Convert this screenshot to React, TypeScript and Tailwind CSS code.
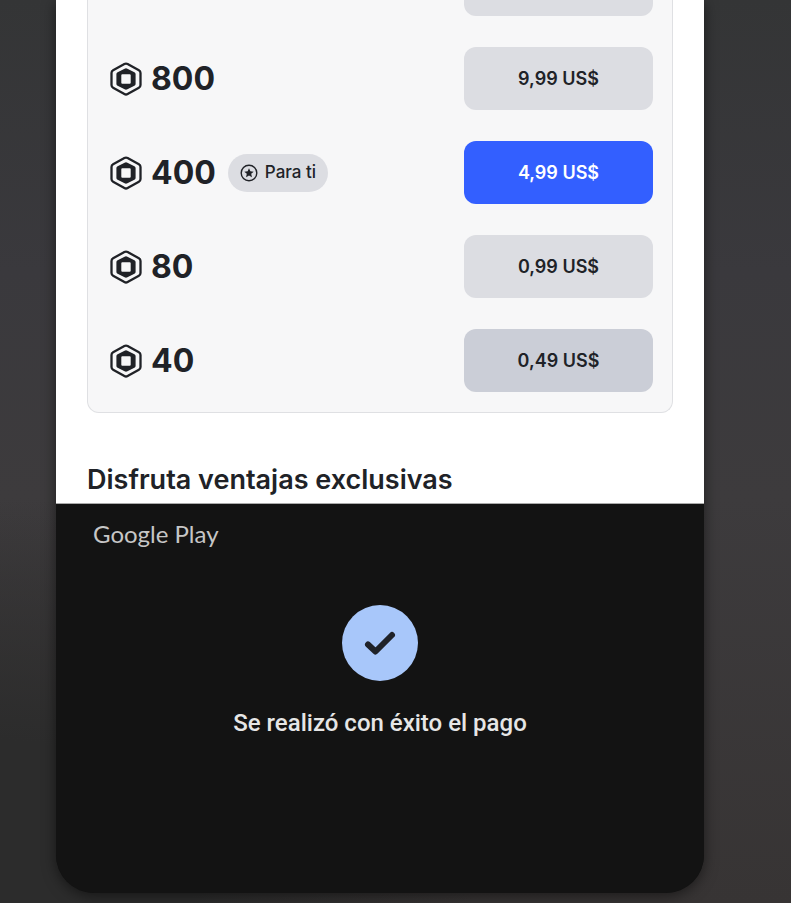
import React from 'react';
import clsx from 'clsx';

const packs = [
  { id: 1, amount: '800', price: '9,99 US$', style: 'bg-[#dcdde2] text-[#202227]' },
  { id: 2, amount: '400', price: '4,99 US$', style: 'bg-[#335fff] text-white', forYou: true },
  { id: 3, amount: '80', price: '0,99 US$', style: 'bg-[#dcdde2] text-[#202227]' },
  { id: 4, amount: '40', price: '0,49 US$', style: 'bg-[#cbced7] text-[#202227]' }
];

const RobuxIcon: React.FC = () => (
  <svg viewBox="0 0 32 34" className="h-[34px] w-8 shrink-0" fill="none" aria-hidden="true">
    <path
      d="M14.4 2a3.2 3.2 0 0 1 3.2 0l11.3 6.3a3.1 3.1 0 0 1 1.6 2.7v12a3.1 3.1 0 0 1-1.6 2.7L17.6 32a3.2 3.2 0 0 1-3.2 0L3.1 25.7A3.1 3.1 0 0 1 1.5 23V11a3.1 3.1 0 0 1 1.6-2.7z"
      stroke="#202227"
      strokeWidth="2.3"
    />
    <path
      fillRule="evenodd"
      d="M14.6 6.7a2.8 2.8 0 0 1 2.8 0l7 3.6a2 2 0 0 1 1.2 1.8v9.8a2 2 0 0 1-1.2 1.8l-7 3.6a2.8 2.8 0 0 1-2.8 0l-7-3.6a2 2 0 0 1-1.2-1.8v-9.8a2 2 0 0 1 1.2-1.8zM12.3 12.3a1 1 0 0 0-1 1v7.4a1 1 0 0 0 1 1h7.4a1 1 0 0 0 1-1v-7.4a1 1 0 0 0-1-1z"
      fill="#202227"
    />
  </svg>
);

const StarIcon: React.FC = () => (
  <svg viewBox="0 0 18 18" className="size-[18px]" aria-hidden="true">
    <circle cx="9" cy="9" r="7.8" fill="none" stroke="#202227" strokeWidth="1.4" />
    <path d="m9 4.3 1.35 3.05 3.35.3-2.5 2.2.75 3.3L9 11.45l-2.95 1.7.75-3.3-2.5-2.2 3.35-.3z" fill="#202227" />
  </svg>
);

const PackList: React.FC = () => (
  <div className="rounded-b-xl border border-t-0 border-[#dfe0e3] bg-[#f7f7f8] pb-5 pl-[22px] pr-[19px]">
    <div className="ml-auto h-4 w-[189px] rounded-b-xl bg-[#dcdde2]" />
    <ul>
      {packs.map((pack) => (
        <li key={pack.id} className="mt-[31px] flex items-center">
          <RobuxIcon />
          <span className="ml-[9px] text-[32px] font-bold leading-10">{pack.amount}</span>
          {pack.forYou && (
            <span className="ml-3 flex h-[38px] items-center gap-[7px] rounded-full bg-[#dcdde2] px-3 text-[17px] font-medium">
              <StarIcon />
              Para ti
            </span>
          )}
          <button
            type="button"
            className={clsx('ml-auto h-[63px] w-[189px] rounded-xl text-lg font-semibold', pack.style)}
          >
            {pack.price}
          </button>
        </li>
      ))}
    </ul>
  </div>
);

const PaymentSheet: React.FC = () => (
  <section className="rounded-b-[38px] border-t border-[#aaaaaa] bg-[#131313] px-[37px] pb-[152px] pt-3 font-[Roboto,sans-serif] text-[#e6e6e6]">
    <div className="font-[Lato,sans-serif] text-2xl leading-9 text-[#c6c6c6]">Google Play</div>
    <div className="mt-[53px] flex flex-col items-center">
      <svg viewBox="0 0 76 76" className="size-[76px]" role="img" aria-label="Pago completado">
        <circle cx="38" cy="38" r="38" fill="#a8c7fa" />
        <path
          d="M26 39.500 33.500 46.500 50 30"
          fill="none"
          stroke="#1f2228"
          strokeWidth="6"
          strokeLinecap="round"
          strokeLinejoin="round"
        />
      </svg>
      <p className="mt-6 text-2xl font-medium leading-9">Se realizó con éxito el pago</p>
    </div>
  </section>
);

const App: React.FC = () => {
  return (
    <div className="min-h-screen bg-[radial-gradient(ellipse_60%_45%_at_0%_100%,#2c2c2c_40%,transparent_100%),linear-gradient(#343536_0%,#3a393d_30%,#3d3b3d_55%,#373434_100%)] pb-2.5 pl-14 pr-[87px] font-[Inter,sans-serif]">
      <main className="rounded-b-[38px] bg-[#131313] shadow-[0_3px_14px_rgba(0,0,0,0.5)]">
        <div className="bg-white px-[31px] text-[#202227]">
          <PackList />
          <h2 className="pb-[3px] pt-[47px] text-[27px] font-semibold leading-10">Disfruta ventajas exclusivas</h2>
        </div>
        <PaymentSheet />
      </main>
    </div>
  );
};

export default App;
